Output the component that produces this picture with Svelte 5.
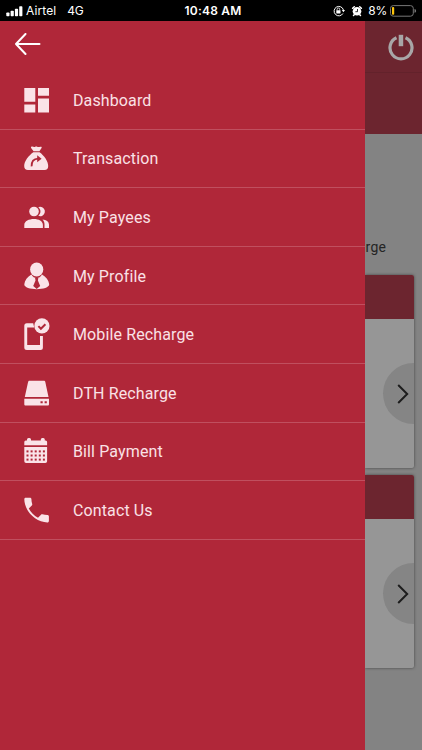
<script>
  const items = [
    { id: 'dashboard', label: 'Dashboard' },
    { id: 'transaction', label: 'Transaction' },
    { id: 'payees', label: 'My Payees' },
    { id: 'profile', label: 'My Profile' },
    { id: 'mobile', label: 'Mobile Recharge' },
    { id: 'dth', label: 'DTH Recharge' },
    { id: 'bill', label: 'Bill Payment' },
    { id: 'contact', label: 'Contact Us' },
  ];

  const cards = [1, 2];
  const calendarRows = [15.4, 19.5, 23.6];
  const calendarCols = [2.5, 6.6, 10.7, 14.8, 18.9];
</script>

<div class="screen">
  <header class="status">
    <div class="status-left">
      <svg class="signal" viewBox="0 0 17 11">
        <rect x="0.3" y="6.5" width="3.2" height="3.8" rx="0.8" />
        <rect x="4.6" y="4.8" width="3.2" height="5.5" rx="0.8" />
        <rect x="8.9" y="2.8" width="3.2" height="7.5" rx="0.8" />
        <rect x="13.2" y="0.3" width="3.2" height="10" rx="0.8" />
      </svg>
      <span class="carrier">Airtel</span>
      <span class="network">4G</span>
    </div>
    <span class="clock">10:48 AM</span>
    <div class="status-right">
      <svg class="lock" viewBox="0 0 12 12">
        <path d="M9.9 8.5A4.7 4.7 0 1 1 10.4 5" fill="none" stroke="#fff" stroke-width="1" />
        <path d="M8.8 5h3.2l-1.6 2.2z" />
        <rect x="3.3" y="5.2" width="4.2" height="3.2" rx="0.4" />
        <path d="M4.1 5.4V4.3a1.3 1.3 0 0 1 2.6 0v1.1" fill="none" stroke="#fff" stroke-width="0.8" />
      </svg>
      <svg class="alarm" viewBox="0 0 12 12">
        <path d="M1.6 3.3 3.3 1.8M10.4 3.3 8.7 1.8M3.2 9.7l-.7.8M8.8 9.7l.7.8" fill="none" stroke="#fff" stroke-width="1.5" stroke-linecap="round" />
        <circle cx="6" cy="6.3" r="4.3" />
        <path d="M6.5 4v2.7H4.4" fill="none" stroke="#000" stroke-width="0.8" />
      </svg>
      <span class="percent">8%</span>
      <svg class="battery" viewBox="0 0 27 12">
        <rect x="0.5" y="0.6" width="22.8" height="10.6" rx="2.8" fill="none" stroke="#777" />
        <rect x="2" y="2.1" width="2.2" height="7.6" rx="0.8" fill="#fdc50b" />
        <path d="M24.5 4.1c1.3.3 1.6 1 1.6 1.8s-.3 1.5-1.6 1.8z" fill="#777" />
      </svg>
    </div>
  </header>

  <div class="body">
    <nav class="drawer">
      <div class="drawer-head">
        <svg class="back" viewBox="0 0 26 22">
          <path d="M24.5 11H1M10.500 1 1 11l9.500 10" fill="none" stroke="#fff" stroke-width="2" stroke-linecap="round" stroke-linejoin="round" />
        </svg>
      </div>

      {#each items as item (item.id)}
        <a class="item" href="#{item.id}">
          <svg class="icon" viewBox="0 0 26 32">
            {#if item.id === 'dashboard'}
              <path d="M.3 4h11v13.7H.3zM14 4h11v7.8H14zM.3 20.4h11v8.2H.3zM14 14.6h11v14H14z" />
            {:else if item.id === 'transaction'}
              <path d="M7.3 4.8c1.5-.7 2.4.8 3.6.1 1-.6 1.7-.6 2.7 0 1.2.7 2-.7 3.7-.1.6.3.5.9.1 1.5l-2 2.900H9.600l-2.300-3c-.4-.6-.5-1.100 0-1.400zM9.300 10.300h6.300c4.500 3.400 8.600 8.800 8.600 13.800 0 2.600-1.200 4-3.700 4H4c-2.500 0-3.800-1.400-3.800-4 0-5 4.400-10.400 9.100-13.800z" />
              <path class="cut" d="M7.600 24.400c-.2-4.800 2.500-7.600 6.600-7.800" />
              <path class="hole" d="m13.200 13.200 4.400 3.500-4.400 3.500z" />
            {:else if item.id === 'payees'}
              <path d="M14.300 6.300a4.300 4.300 0 0 1 1.700-.5 4.700 4.700 0 1 1-1.700 9c2.900-2.200 2.900-6.300 0-8.500zM.3 27v-3c0-4 4.800-6 9.600-6s9 2 9 6v3zM18.500 18.500c3.600.3 6.500 2 6.500 5.300V27h-4.500v-3.500c0-2-.7-3.800-2-5z" />
              <circle cx="10" cy="10.5" r="4.8" />
            {:else if item.id === 'profile'}
              <ellipse cx="12.7" cy="9.5" rx="6.600" ry="7.1" />
              <path d="M7.400 14.600c1.300 2.300 3.100 3.600 5.300 3.600s4-1.300 5.300-3.600c4 2.400 6.800 5.800 7.200 9.700.1 3.200-6.200 4.900-12.500 4.900S.1 27.500.3 24.300c.4-3.900 3.100-7.300 7.100-9.700z" />
              <path class="hole" d="M11.100 18.100h3.200l-.4 2.300 2.300 5.700-3.500 3-3.500-3 2.300-5.700z" />
            {:else if item.id === 'mobile'}
              <path d="M9.200 5.300H2.800A2.500 2.500 0 0 0 .3 7.800v21.600a2.500 2.500 0 0 0 2.500 2.500h13.600a2.500 2.500 0 0 0 2.500-2.500V18h-2.900v8.900H3.200V9.600h7z" />
              <circle cx="17.900" cy="7.900" r="7.600" />
              <path class="cut check" d="m14.400 8.100 2.500 2.600 4.500-4.500" />
            {:else if item.id === 'dth'}
              <path d="M5.700 3.700h14c1 0 1.400.5 1.600 1.300l3.200 15H.8L4.100 5c.2-.8.6-1.300 1.600-1.300z" />
              <path d="M.3 21.700H25v5.500c0 .8-.5 1.300-1.300 1.300H1.600c-.8 0-1.300-.5-1.300-1.300z" />
              <path class="hole" d="M16.500 24.200h2.200v2.100h-2.200zM20.600 24.200h2.200v2.100h-2.200z" />
            {:else if item.id === 'bill'}
              <path d="M2 5.400h1V4.600a1.500 1.500 0 0 1 1.500-1.500h1A1.500 1.500 0 0 1 7 4.600v.8h9.800v-.8a1.500 1.500 0 0 1 1.500-1.500h1a1.500 1.500 0 0 1 1.500 1.500v.8h.8a1.600 1.600 0 0 1 1.500 1.600v3.300H.3V7A1.600 1.600 0 0 1 2 5.400zM.3 12h22.800v14.300a1.800 1.800 0 0 1-1.800 1.800H2.100a1.800 1.800 0 0 1-1.800-1.800z" />
              {#each calendarRows as y}
                {#each calendarCols as x}
                  <rect class="hole" {x} {y} width="2" height="2" />
                {/each}
              {/each}
            {:else}
              <path d="M1.700 3.700H6c.8 0 1.400.6 1.400 1.400 0 1.700.3 3.400.8 5 .2.500 0 1-.4 1.400l-3 3.100c2 4 5.200 7.100 9.200 9.100l3-3c.4-.4.9-.5 1.400-.4 1.600.5 3.300.8 5 .8.8 0 1.500.6 1.500 1.400v4.400c0 .8-.7 1.500-1.500 1.500C11.700 28.400.3 17 .3 5.100c0-.8.6-1.400 1.400-1.400z" />
            {/if}
          </svg>
          <span class="label">{item.label}</span>
        </a>
      {/each}
    </nav>

    <!-- page behind the open drawer, dimmed -->
    <main class="page">
      <div class="toolbar">
        <svg class="power" viewBox="0 0 26 27">
          <path d="M8.500 3.800a11 11 0 1 0 9 0" fill="none" stroke="#a8a6a7" stroke-width="3.200" />
          <rect x="10.700" y="0.800" width="4.500" height="11.400" fill="#a8a6a7" />
        </svg>
      </div>
      <div class="banner"></div>
      <div class="heading">rge</div>
      {#each cards as card}
        <section class="card">
          <div class="card-head"></div>
          <div class="card-body">
            <div class="next">
              <svg viewBox="0 0 12 20">
                <path d="m1.200 1 9 9-9 9" fill="none" stroke="#1d1d1d" stroke-width="2" />
              </svg>
            </div>
          </div>
        </section>
      {/each}
    </main>
  </div>
</div>

<style>
  :global(body) {
    margin: 0;
    background: #838383;
  }

  .screen {
    width: 422px;
    height: 750px;
    overflow: hidden;
    display: flex;
    flex-direction: column;
    font-family: Roboto, sans-serif;
  }

  /* ---- STATUS BAR ---- */
  .status {
    height: 21px;
    flex: none;
    box-sizing: border-box;
    padding: 1px 6px 0;
    display: grid;
    grid-template-columns: 1fr auto 1fr;
    align-items: center;
    background: #000;
    color: #fff;
    fill: #fff;
    font: 12px/20px Inter, sans-serif;
  }
  .status-left,
  .status-right {
    display: flex;
    align-items: center;
  }
  .status-right {
    justify-content: flex-end;
  }
  .signal {
    width: 17px;
    height: 11px;
    margin-right: 3px;
  }
  .carrier {
    letter-spacing: 0.1px;
  }
  .network {
    margin-left: 11px;
    letter-spacing: -0.2px;
  }
  .clock {
    font-weight: 600;
    letter-spacing: 0.2px;
    margin-left: 4px;
  }
  .lock {
    width: 12px;
    height: 12px;
    margin-right: 6px;
  }
  .alarm {
    width: 12px;
    height: 12px;
    margin-right: 5px;
  }
  .percent {
    letter-spacing: -0.2px;
    margin-right: 3px;
  }
  .battery {
    width: 27px;
    height: 12px;
    margin-right: -1px;
  }

  .body {
    flex: 1;
    display: flex;
    min-height: 0;
  }

  /* ---- DRAWER ---- */
  .drawer {
    position: relative;
    z-index: 1;
    width: 364.6px;
    flex: none;
    background: #b02739;
  }
  .drawer-head {
    height: 50px;
    box-sizing: border-box;
    padding: 12px 15px;
  }
  .back {
    display: block;
    width: 26px;
    height: 22px;
  }
  .item {
    display: flex;
    align-items: center;
    height: 58.6px;
    box-sizing: border-box;
    border-bottom: 1px solid #c04f5f;
    padding-left: 24px;
    color: #fae1e6;
    text-decoration: none;
  }
  .icon {
    width: 26px;
    height: 32px;
    margin-right: 23px;
    fill: #fae3e8;
  }
  .cut {
    fill: none;
    stroke: #b02739;
    stroke-width: 1.8;
  }
  .check {
    stroke-width: 2;
  }
  .hole {
    fill: #b02739;
  }
  .label {
    padding-top: 2px;
    font-size: 16px;
    line-height: 20px;
    letter-spacing: 0.12px;
  }

  /* ---- PAGE ---- */
  .page {
    flex: 1;
    min-width: 0;
    background: #838383;
  }
  .toolbar {
    height: 52px;
    box-sizing: border-box;
    padding: 13px 0 0 23px;
    background: #6c252f;
    border-bottom: 1px solid #63222b;
  }
  .power {
    display: block;
    width: 26px;
    height: 27px;
  }
  .banner {
    height: 61px;
    background: #6c252f;
  }
  .heading {
    height: 141px;
    box-sizing: border-box;
    padding: 103px 0 0 1px;
    color: #252525;
    font-size: 14px;
    line-height: 20px;
    letter-spacing: 0.2px;
  }
  .card {
    width: 49px;
    height: 192.7px;
    margin-bottom: 7.6px;
    border-radius: 0 2px 2px 0;
    overflow: hidden;
    background: #969696;
    box-shadow: 0 0 3px rgba(0, 0, 0, 0.5);
  }
  .card-head {
    height: 44px;
    background: #6c252f;
  }
  .card-body {
    display: flex;
    justify-content: flex-end;
    align-items: center;
    height: 149px;
  }
  .next {
    flex: none;
    width: 30.5px;
    height: 61px;
    display: flex;
    align-items: center;
    box-sizing: border-box;
    padding-left: 14px;
    background: #858585;
    border-radius: 30.5px 0 0 30.5px;
  }
  .next svg {
    width: 12px;
    height: 20px;
  }
</style>
